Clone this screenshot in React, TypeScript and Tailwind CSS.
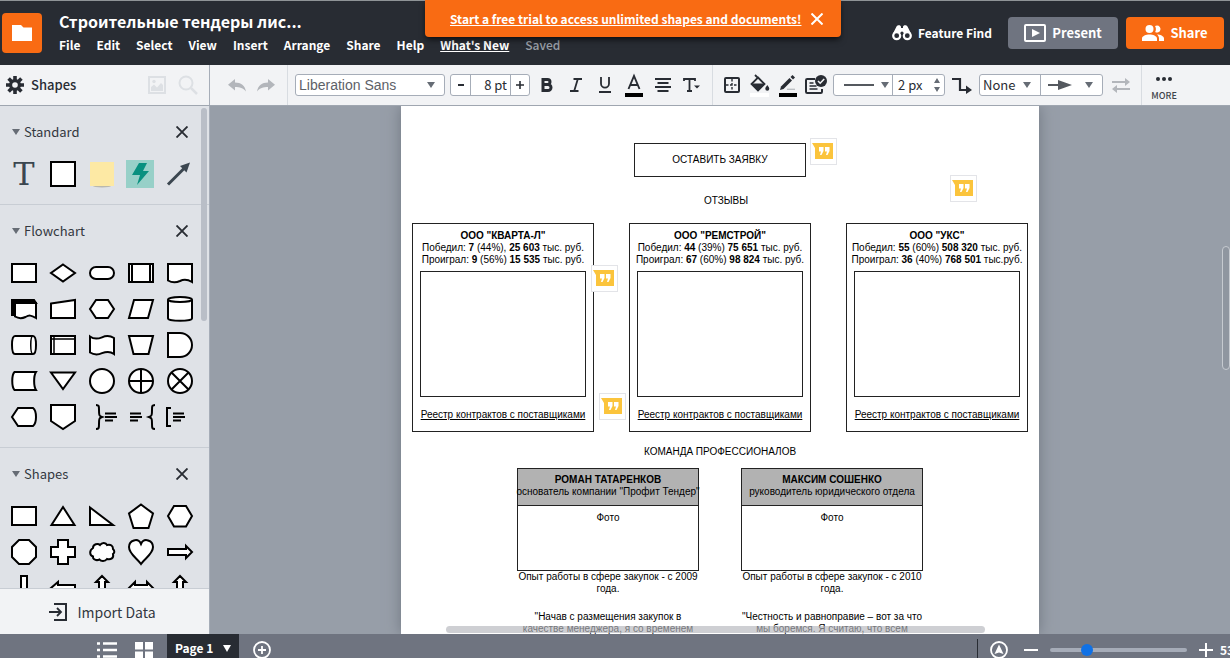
import React from 'react';

const UI_FONT = "font-['Noto_Sans_CJK_SC','Noto_Sans',sans-serif]";

/* ---------- small pieces ---------- */

const Caret: React.FC<{ className?: string }> = ({ className = '' }) => (
  <svg className={`pointer-events-none ${className}`} width="8" height="6" viewBox="0 0 8 6" fill="#666c75" aria-hidden="true">
    <path d="M0 0h8L4 6z" />
  </svg>
);

const Divider = ({ className = '' }: { className?: string }) => (
  <div className={`w-px shrink-0 self-stretch bg-[#d8dce1] ${className}`} />
);

interface ToolProps {
  label: string;
  className: string;
  children: React.ReactNode;
}

const Tool: React.FC<ToolProps> = ({ label, className, children }) => (
  <button type="button" aria-label={label} className={`flex h-8 shrink-0 items-center justify-center ${className}`}>
    {children}
  </button>
);

/* ---------- header ---------- */

const menuItems = ['File', 'Edit', 'Select', 'View', 'Insert', 'Arrange', 'Share', 'Help'];

const Header = () => (
  <header className="relative flex h-[65px] shrink-0 border-t border-[#8f9497] bg-[#282c33] text-white">
    <button type="button" aria-label="Documents" className="mt-3 ml-0.5 flex h-10 w-10 shrink-0 items-center justify-center rounded bg-[#f96b13]">
      <svg width="20" height="16" viewBox="0 0 20 16" fill="#fff">
        <path d="M0 0h9l2.500 2.500H20V16H0z" />
      </svg>
    </button>
    <div className="ml-[17px] min-w-0 flex-1">
      <h1 className="mt-2 h-6 text-base leading-6 font-bold whitespace-nowrap">Строительные тендеры лис...</h1>
      <nav className="mt-0.5 flex h-5 gap-4 text-xs leading-5 font-bold whitespace-nowrap">
        {menuItems.map((item) => (
          <button type="button" key={item}>{item}</button>
        ))}
        <a href="#news" className="underline">What's New</a>
        <span className="font-medium text-[#9a9fa8]">Saved</span>
      </nav>
    </div>
    <div className="mr-1.5 flex h-full items-center gap-2 text-[13px] font-bold">
      <button type="button" className="mr-2 flex items-center gap-1.5 text-xs font-bold">
        <svg width="20" height="16" viewBox="0 0 20 16" aria-hidden="true">
          <path d="M4.500 1.500C5.500-.2 9-.2 9 2v1h2V2c0-2.200 3.500-2.200 4.500-.5L19 8.500H1z" fill="#fff" />
          <circle cx="4.700" cy="10.700" r="3.500" fill="#282c33" stroke="#fff" strokeWidth="2.200" />
          <circle cx="15.300" cy="10.700" r="3.500" fill="#282c33" stroke="#fff" strokeWidth="2.200" />
          <circle cx="10" cy="8" r="1.600" fill="#282c33" />
        </svg>
        Feature Find
      </button>
      <button type="button" className="flex h-8 w-[110px] items-center justify-center gap-1.5 rounded bg-[#6f7480]">
        <svg width="22" height="18" viewBox="0 0 22 18" fill="none" aria-hidden="true">
          <rect x="1" y="1" width="20" height="16" rx="1" stroke="#fff" strokeWidth="2" />
          <path d="M8 5l8 4-8 4z" fill="#fff" />
        </svg>
        Present
      </button>
      <button type="button" className="flex h-8 w-[98px] items-center justify-center gap-1.5 rounded bg-[#f96b13]">
        <svg width="22" height="16" viewBox="0 0 22 16" fill="#fff" aria-hidden="true">
          <circle cx="7.500" cy="4" r="4" />
          <path d="M15 .5a3.500 3.500 0 1 1-1.800 6.500c1-1.700 1-4.300-.2-6z" />
          <path d="M0 16v-2.500C0 11 4 9.500 7.500 9.500S15 11 15 13.500V16zM15 9.500c3 0 7 1.500 7 4V16h-5v-2.500c0-1.600-.8-2.900-2-4z" />
        </svg>
        Share
      </button>
    </div>
    <div className="absolute -top-px left-[425px] flex h-[37px] w-[416px] items-center justify-between rounded-b bg-[#f96b13] pr-[18px] pl-[25px] shadow-md shadow-black/50">
      <a href="#trial" className="text-xs leading-5 font-bold whitespace-nowrap underline">
        Start a free trial to access unlimited shapes and documents!
      </a>
      <button type="button" aria-label="Close">
        <svg width="12" height="12" viewBox="0 0 12 12" stroke="#fff" strokeWidth="2">
          <path d="M.5.5l11 11M11.500.5l-11 11" />
        </svg>
      </button>
    </div>
  </header>
);

/* ---------- toolbar ---------- */

const boxClass = 'flex h-[22px] shrink-0 items-stretch overflow-hidden rounded-[3px] border border-[#a6adb8] bg-white';

const Toolbar = () => (
  <div className="flex h-[41px] shrink-0 items-center border-b border-[#9fa6b0] bg-[#f2f3f5] text-[#282c33]">
    <div className="flex h-full w-[210px] shrink-0 items-center border-r border-[#a6adb8] pl-1.5">
      <svg width="18" height="18" viewBox="0 0 18 18" aria-hidden="true">
        <g stroke="#282c33" strokeWidth="3.600">
          <path d="M9 0v18M0 9h18M2.600 2.600l12.800 12.800M15.400 2.600L2.600 15.400" />
        </g>
        <circle cx="9" cy="9" r="6" fill="#282c33" />
        <circle cx="9" cy="9" r="2.800" fill="#f2f3f5" />
      </svg>
      <h2 className="ml-[7px] text-[13px] leading-5 font-medium">Shapes</h2>
      <button type="button" aria-label="Images" className="ml-auto">
        <svg width="18" height="18" viewBox="0 0 18 18" fill="none">
          <rect x="1" y="1" width="16" height="16" stroke="#dde0e4" strokeWidth="2" />
          <circle cx="6" cy="5.500" r="1.700" fill="#dde0e4" />
          <path d="M3 15v-4l3-2.500 3 3 4-4.500 2 2V15z" fill="#dde0e4" />
        </svg>
      </button>
      <button type="button" aria-label="Search shapes" className="mr-[11px] ml-3">
        <svg width="20" height="20" viewBox="0 0 20 20" fill="none" stroke="#dde0e4">
          <circle cx="8" cy="8" r="6.500" strokeWidth="2" />
          <path d="M13 13l6 6" strokeWidth="2.500" />
        </svg>
      </button>
    </div>

    <Tool label="Undo" className="ml-[18px] w-[18px]">
      <svg width="18" height="13" viewBox="0 0 18 13" fill="#b3b6bb">
        <path d="M7 0v3.500c6 0 10 3 11 9-3-3.500-6-4.500-11-4.500v3.500L0 5.800z" />
      </svg>
    </Tool>
    <Tool label="Redo" className="ml-[11px] w-[18px]">
      <svg width="18" height="13" viewBox="0 0 18 13" fill="#b3b6bb">
        <path d="M11 0v3.500c-6 0-10 3-11 9C3 9 6 8 11 8v3.500l7-5.700z" />
      </svg>
    </Tool>
    <Divider className="ml-3" />

    <div className={`relative ml-[7px] w-[150px] ${boxClass}`}>
      <select aria-label="Font" className="w-full appearance-none pl-[3px] font-['Liberation_Sans',sans-serif] text-sm leading-5 text-[#5d6168]">
        <option>Liberation Sans</option>
      </select>
      <Caret className="absolute top-[7px] right-[9px]" />
    </div>

    <div className={`ml-[5px] w-20 text-[13px] leading-5 ${boxClass}`}>
      <button type="button" aria-label="Smaller" className="flex w-5 items-center justify-center border-r border-[#a6adb8]">
        <span className="h-0.5 w-1.5 bg-[#282c33]" />
      </button>
      <input aria-label="Font size" defaultValue="8 pt" className="w-[39px] pr-[3px] text-right text-[13px] leading-5" />
      <button type="button" aria-label="Larger" className="flex flex-1 items-center justify-center border-l border-[#a6adb8]">
        <svg width="8" height="8" viewBox="0 0 8 8" stroke="#282c33" strokeWidth="1.600"><path d="M4 0v8M0 4h8" /></svg>
      </button>
    </div>

    <Tool label="Bold" className="ml-0.5 w-[29px]">
      <svg width="12" height="14" viewBox="0 0 12 14" fill="none" stroke="#282c33" strokeWidth="3">
        <path d="M2 1.500h4.500a2.500 2.500 0 0 1 0 5H2M2 6.500h5a3 3 0 0 1 0 6H2M2 0v14" />
      </svg>
    </Tool>
    <Tool label="Italic" className="w-[29px]">
      <svg width="12" height="14" viewBox="0 0 12 14" fill="none" stroke="#282c33" strokeWidth="1.800">
        <path d="M3.500 1H12M0 13h8.500M7.800 1L4.200 13" />
      </svg>
    </Tool>
    <Tool label="Underline" className="w-[29px]">
      <svg width="12" height="16" viewBox="0 0 12 16" fill="none" stroke="#282c33" strokeWidth="1.800">
        <path d="M2 0v6.500a4 4.200 0 0 0 8 0V0M0 15h12" />
      </svg>
    </Tool>
    <Tool label="Text color" className="w-[29px]">
      <svg width="18" height="24" viewBox="0 0 18 24" fill="none">
        <path d="M3.500 16L9 3l5.500 13M5.500 12h7" stroke="#282c33" strokeWidth="1.900" />
        <rect y="20" width="18" height="4" fill="#000" />
      </svg>
    </Tool>
    <Tool label="Align" className="w-[29px]">
      <svg width="16" height="14" viewBox="0 0 16 14" stroke="#282c33" strokeWidth="1.800">
        <path d="M0 1h16M2.500 5h11M0 9h16M2.500 13h11" />
      </svg>
    </Tool>
    <Tool label="Text position" className="w-[29px]">
      <svg width="17" height="14" viewBox="0 0 17 14" fill="none">
        <path d="M1 3V1h11v2M6.500 1v12M4 13h5" stroke="#282c33" strokeWidth="1.800" />
        <path d="M11 7.500h6l-3 3z" fill="#282c33" />
      </svg>
    </Tool>
    <Divider className="ml-1.5" />

    <Tool label="Borders" className="ml-[5px] w-7">
      <svg width="16" height="16" viewBox="0 0 16 16" fill="none" stroke="#282c33">
        <rect x="1" y="1" width="14" height="14" rx="1" strokeWidth="2" />
        <path d="M8 2v12M2 8h12" strokeWidth="1.400" strokeDasharray="2.500 1.500" />
      </svg>
    </Tool>
    <Tool label="Fill" className="w-7">
      <svg width="20" height="24" viewBox="0 0 20 24" fill="none">
        <path d="M5 2l3 3M8 4.500l6.500 6.500L8 17.500 1.500 11z" stroke="#282c33" strokeWidth="1.800" />
        <path d="M2 10.500h12.500L8 18z" fill="#282c33" />
        <path d="M17.300 12c1.200 1.700 2 2.700 2 3.700a2 2 0 0 1-4 0c0-1 .8-2 2-3.700z" fill="#282c33" />
        <rect x="0" y="20" width="19" height="4" fill="#fff" />
      </svg>
    </Tool>
    <Tool label="Line color" className="w-7">
      <svg width="18" height="24" viewBox="0 0 18 24" fill="none">
        <path d="M1 17l1-3.500L10.500 5l2.500 2.500L4.500 16z" fill="#282c33" />
        <path d="M11.500 4l2-2L16 4.500l-2 2z" fill="#282c33" />
        <path d="M8 16.300h8" stroke="#b9bcc1" strokeWidth="1.300" />
        <rect y="20" width="18" height="4" fill="#000" />
      </svg>
    </Tool>
    <Tool label="Shape options" className="w-7">
      <svg width="22" height="20" viewBox="0 0 22 20" fill="none">
        <path d="M10 4H2.200Q1 4 1 5.200v11.600Q1 18 2.200 18h13.600q1.200 0 1.200-1.200V14" stroke="#282c33" strokeWidth="2" />
        <path d="M4.500 8h4M4.500 11h7M4.500 14h8" stroke="#282c33" strokeWidth="1.600" />
        <circle cx="16" cy="6" r="6" fill="#282c33" />
        <path d="M13 6l2.200 2.200L19.200 4" stroke="#f2f3f5" strokeWidth="1.600" />
      </svg>
    </Tool>

    <div className={`ml-[3px] w-[112px] ${boxClass}`}>
      <button type="button" aria-label="Line style" className="flex w-[59px] items-center justify-between border-r border-[#a6adb8] pr-[3px] pl-2.5">
        <span className="h-0.5 w-[30px] bg-[#55595f]" />
        <Caret />
      </button>
      <input aria-label="Line width" defaultValue="2 px" className="w-0 min-w-0 flex-1 pl-[5px] text-[13px] leading-5" />
      <svg className="mr-1 shrink-0 self-center" width="6" height="14" viewBox="0 0 6 14" fill="#666c75" aria-hidden="true">
        <path d="M0 5l3-5 3 5zM0 9h6l-3 5z" />
      </svg>
    </div>
    <Tool label="Line shape" className="w-[34px]">
      <svg width="20" height="17" viewBox="0 0 20 17" fill="none">
        <path d="M0 2h8v11h7" stroke="#282c33" strokeWidth="2.200" />
        <path d="M14 8.500l6 4.500-6 4z" fill="#282c33" />
      </svg>
    </Tool>
    <div className={`w-[124px] ${boxClass}`}>
      <div className="relative flex w-[61px] items-stretch border-r border-[#a6adb8]">
        <select aria-label="Line start" className="w-full appearance-none pl-[3px] text-[13px] leading-5">
          <option>None</option>
        </select>
        <Caret className="absolute top-[7px] right-[9px]" />
      </div>
      <button type="button" aria-label="Line end" className="flex flex-1 items-center justify-between pr-[9px] pl-[7px]">
        <svg width="24" height="10" viewBox="0 0 24 10" fill="#55595f">
          <path d="M0 4h10V0l14 5-14 5V6H0z" />
        </svg>
        <Caret />
      </button>
    </div>
    <Tool label="Swap ends" className="w-9">
      <svg width="18" height="15" viewBox="0 0 18 15" fill="none" stroke="#b3b6bb" strokeWidth="1.800">
        <path d="M0 4h15M18 11H3" />
        <path d="M13 0l5 4-5 4zM5 7l-5 4 5 4z" fill="#b3b6bb" stroke="none" />
      </svg>
    </Tool>
    <Divider className="ml-0.5" />
    <button type="button" className="flex w-11 shrink-0 flex-col items-center pt-2 text-[9px] leading-3 font-medium text-[#3f444b]">
      <svg className="mb-[9px]" width="16" height="4" viewBox="0 0 16 4" fill="#282c33" aria-hidden="true">
        <circle cx="2" cy="2" r="2" />
        <circle cx="8" cy="2" r="2" />
        <circle cx="14" cy="2" r="2" />
      </svg>
      MORE
    </button>
  </div>
);

/* ---------- sidebar ---------- */

const textLines = (x: number) => <path d={`M${x} 14.500h11M${x} 18h12M${x} 21.500h8`} />;

const standardShapes: Record<string, React.ReactNode> = {
  Block: <rect x="8" y="6" width="24" height="24" />,
  Note: (
    <g stroke="none">
      <ellipse cx="20" cy="30" rx="9" ry="1.500" fill="#b9b8ae" />
      <rect x="8" y="6" width="24" height="24" fill="#fde9a4" />
    </g>
  ),
  Action: (
    <g stroke="none">
      <rect x="5" y="4" width="28" height="28" fill="#97d0c8" />
      <path d="M18 7h8l-4 8h6L16 29l3-10h-8z" fill="#08907f" />
    </g>
  ),
  Line: (
    <g stroke="#3b4650" fill="#3b4650">
      <path d="M8 28.500L25 11.500" strokeWidth="3" />
      <path d="M30 6.500l-3.500 10-6.500-6.500z" stroke="none" />
    </g>
  ),
};

const flowchartShapes: Record<string, React.ReactNode> = {
  Process: <rect x="8" y="9" width="24" height="18" />,
  Decision: <path d="M20 9.500l12 8.500-12 8.500L8 18z" />,
  Terminator: <rect x="8" y="12" width="24" height="12" rx="6" />,
  'Predefined process': (
    <>
      <rect x="8" y="9" width="24" height="18" />
      <path d="M11 9v18M29 9v18" strokeWidth="2" />
    </>
  ),
  Document: <path d="M8 9h24v18c-5-3-8-3-12-1-4 1.800-8 1.800-12-.5z" />,
  'Multiple documents': (
    <>
      <path d="M8 9h22l2 3H11v12H8z" fill="#000" />
      <path d="M11 12h21v15c-5-3-7-3-10.500-1-3.500 1.600-7 1.600-10.500-.5z" />
    </>
  ),
  'Manual input': <path d="M8 12.500L32 9v18H8z" />,
  Preparation: <path d="M14 9h12l6 9-6 9H14l-6-9z" />,
  Data: <path d="M13 9h19l-5 18H8z" />,
  Database: (
    <>
      <path d="M8 8.500v19c0 3 24 3 24 0v-19" />
      <ellipse cx="20" cy="8.500" rx="12" ry="2.500" />
    </>
  ),
  'Direct access storage': (
    <>
      <path d="M11 9h18c4 0 4 18 0 18H11c-4 0-4-18 0-18z" />
      <path d="M29 9c-3 0-3 18 0 18" strokeWidth="1.500" />
    </>
  ),
  'Internal storage': (
    <>
      <rect x="8" y="9" width="24" height="18" />
      <path d="M11 9v18M8 12h24" strokeWidth="1.500" />
    </>
  ),
  'Paper tape': <path d="M8 9.500c4 3 8 2.500 12 .8 4-1.800 8-1.800 12 .7v16c-4-3-8-2.500-12-.8-4 1.800-8 1.800-12-.7z" />,
  'Manual operation': <path d="M8 9h24l-4.500 18h-15z" />,
  Delay: <path d="M8 6h12a12 12 0 0 1 0 24H8z" />,
  'Stored data': <path d="M10.500 9H32c-2.500 4-2.500 14 0 18H10.500C7.500 24 7.500 12 10.500 9z" />,
  Merge: <path d="M8 9.500h24L20 26z" />,
  Connector: <circle cx="20" cy="18" r="12" />,
  Or: (
    <>
      <circle cx="20" cy="18" r="12" />
      <path d="M20 6v24M8 18h24" />
    </>
  ),
  'Summing junction': (
    <>
      <circle cx="20" cy="18" r="12" />
      <path d="M11.500 9.500l17 17M28.500 9.500l-17 17" />
    </>
  ),
  Display: <path d="M14 9h15c4 3 4 15 0 18H14l-6-9z" />,
  'Off-page link': <path d="M8 6h24v16l-12 8-12-8z" />,
  'Brace note': (
    <g fill="none">
      <path d="M14 6c3 0 3 1 3 5 0 5 0 6 3 7-3 1-3 2-3 7 0 4 0 5-3 5" />
      {textLines(23)}
    </g>
  ),
  'Left brace note': (
    <g fill="none">
      <path d="M34 6c-3 0-3 1-3 5 0 5 0 6-3 7 3 1 3 2 3 7 0 4 0 5 3 5" />
      {textLines(9)}
    </g>
  ),
  Bracket: (
    <g fill="none">
      <path d="M11 9H7v18h4" />
      {textLines(13)}
    </g>
  ),
};

const basicShapes: Record<string, React.ReactNode> = {
  Rectangle: <rect x="8" y="9" width="24" height="18" />,
  Triangle: <path d="M20 9l11.500 18h-23z" />,
  'Right triangle': <path d="M8 9.500V27h23z" />,
  Pentagon: <path d="M20 6.500l12 9L27.500 30h-15L8 15.500z" />,
  Hexagon: <path d="M14 8h12l6 10-6 10.500H14L8 18z" />,
  Octagon: <path d="M15 6h10l7 7v10l-7 7H15l-7-7V13z" />,
  Cross: <path d="M15 6h10v7h7v10h-7v7H15v-7H8V13h7z" />,
  Cloud: (
    <path d="M11 14c0-4 5-5 7-3 2-3 6-2.500 7 0 4-1 6 1 6 4 2 2 1.500 4 0 5 1 4-2 6-6 5-2 2.500-6 2.500-7.500.5-3 1.500-7 0-6.500-3-3.500-1-4-6 0-8.500z" />
  ),
  Heart: <path d="M20 30C16 24 8 20 8 13c0-6.500 9-10 12-3 3-7 12-3.500 12 3 0 7-8 11-12 17z" />,
  'Right arrow': <path d="M8 15h18v-3l6 6-6 6v-3H8z" />,
  'Down arrow': <path d="M17 6h6v22h5l-8 6-8-6h5z" />,
  'Left arrow': <path d="M32 15H15v-3l-7 6 7 6v-3h17z" />,
  'Up arrow': <path d="M20 6l6 6h-3v18h-6V12h-3z" />,
  'Double arrow': <path d="M8 18l6-6v3h12v-3l6 6-6 6v-3H14v3z" />,
  'Vertical arrow': <path d="M20 6l6 6h-3v12h3l-6 6-6-6h3V12h-3z" />,
};

interface ShapeSectionProps {
  title: string;
  shapes: Record<string, React.ReactNode>;
  withText?: boolean;
}

const ShapeSection: React.FC<ShapeSectionProps> = ({ title, shapes, withText }) => (
  <section className="shrink-0 border-b border-[#c8cdd4] pb-3">
    <div className="flex h-[50px] items-center pt-0.5 pr-[21px] pl-3">
      <Caret />
      <h3 className="ml-1 text-[13px] leading-5 text-[#33383f]">{title}</h3>
      <button type="button" aria-label={`Close ${title}`} className="ml-auto">
        <svg width="12" height="12" viewBox="0 0 12 12" stroke="#282c33" strokeWidth="1.900">
          <path d="M.5.5l11 11M11.500.5l-11 11" />
        </svg>
      </button>
    </div>
    <div className="ml-1 grid w-[195px] grid-cols-5">
      {withText && (
        <button type="button" aria-label="Text" className="h-9 pl-px font-['DejaVu_Serif',serif] text-[32px] leading-9 text-[#3b4650]">
          T
        </button>
      )}
      {Object.entries(shapes).map(([name, drawing]) => (
        <button type="button" key={name} aria-label={name} className="h-9">
          <svg width="39" height="36" viewBox="0 0 39 36" fill="#fff" stroke="#000" strokeWidth="2">
            {drawing}
          </svg>
        </button>
      ))}
    </div>
  </section>
);

const Sidebar = () => (
  <aside className="relative flex w-[210px] shrink-0 flex-col border-r border-[#a6adb8] bg-[#dfe2e7]">
    <div className="flex min-h-0 flex-1 flex-col overflow-hidden">
      <ShapeSection title="Standard" shapes={standardShapes} withText />
      <ShapeSection title="Flowchart" shapes={flowchartShapes} />
      <ShapeSection title="Shapes" shapes={basicShapes} />
    </div>
    <div className="absolute top-0.5 right-0.5 h-[213px] w-1.5 rounded-full bg-[#b9bec7]" />
    <button type="button" className="flex h-[46px] shrink-0 items-center justify-center gap-2.5 border-t border-[#c8cdd4] bg-[#f2f3f5] pr-1 text-sm text-[#33383f]">
      <svg width="18" height="18" viewBox="0 0 18 18" fill="none" stroke="#282c33" strokeWidth="2" aria-hidden="true">
        <path d="M5 1h12v16H5" />
        <path d="M0 9h11M8 5l4 4-4 4" strokeWidth="1.800" />
      </svg>
      Import Data
    </button>
  </aside>
);

/* ---------- document ---------- */

interface Company {
  name: string;
  won: React.ReactNode;
  lost: React.ReactNode;
}

const companies: Company[] = [
  {
    name: 'ООО "КВАРТА-Л"',
    won: <>Победил: <b>7</b> (44%), <b>25 603</b> тыс. руб.</>,
    lost: <>Проиграл: <b>9</b> (56%) <b>15 535</b> тыс. руб.</>,
  },
  {
    name: 'ООО "РЕМСТРОЙ"',
    won: <>Победил: <b>44</b> (39%) <b>75 651</b> тыс. руб.</>,
    lost: <>Проиграл: <b>67</b> (60%) <b>98 824</b> тыс. руб.</>,
  },
  {
    name: 'ООО "УКС"',
    won: <>Победил: <b>55</b> (60%) <b>508 320</b> тыс. руб.</>,
    lost: <>Проиграл: <b>36</b> (40%) <b>768 501</b> тыс.руб.</>,
  },
];

const people = [
  {
    name: 'РОМАН ТАТАРЕНКОВ',
    role: 'основатель компании "Профит Тендер"',
    experience: 'Опыт работы в сфере закупок - с 2009 года.',
    quote: ['"Начав с размещения закупок в', 'качестве менеджера, я со временем'],
  },
  {
    name: 'МАКСИМ СОШЕНКО',
    role: 'руководитель юридического отдела',
    experience: 'Опыт работы в сфере закупок - с 2010 года.',
    quote: ['"Честность и равноправие – вот за что', 'мы боремся. Я считаю, что всем'],
  },
];

const Comment: React.FC<{ className: string }> = ({ className }) => (
  <button type="button" aria-label="Comment" className={`absolute flex h-[27px] w-[27px] items-center justify-center border border-[#e3e4e8] bg-white ${className}`}>
    <svg width="23" height="17" viewBox="0 0 23 17">
      <path d="M0 0h21v16H3V5z" fill="#fbc43c" />
      <path d="M7 4h4.500v4L9.500 12H8l1-3.500H7zM13 4h4.500v4l-2 4H14l1-3.500h-2z" fill="#fff" />
    </svg>
  </button>
);

const Canvas = () => (
  <main className="relative min-w-0 flex-1 overflow-hidden bg-[#979ea8] font-['Liberation_Sans',Arial,sans-serif] text-[10px] leading-3 text-black">
    <div className="relative mx-auto flex h-full w-[638px] flex-col items-center bg-white shadow-[0_0_14px_#6f7681]">
      <div className="mt-[37px] flex h-[34px] w-[172px] shrink-0 items-center justify-center border border-[#222]">ОСТАВИТЬ ЗАЯВКУ</div>
      <p className="mt-[18px] pl-3">ОТЗЫВЫ</p>
      <div className="mt-4 flex w-full shrink-0 justify-between px-[11px]">
        {companies.map((company) => (
          <article key={company.name} className="flex h-[209px] w-[182px] flex-col items-center border border-[#222] pt-1.5 whitespace-nowrap">
            <h4 className="font-bold">{company.name}</h4>
            <p>{company.won}</p>
            <p className="leading-[11px]">{company.lost}</p>
            <div className="mt-1.5 h-[126px] w-[166px] border border-[#222]" />
            <a href="#contracts" className="mt-3 underline">Реестр контрактов с поставщиками</a>
          </article>
        ))}
      </div>
      <p className="mt-3.5">КОМАНДА ПРОФЕССИОНАЛОВ</p>
      <div className="mt-2.5 flex shrink-0 gap-[42px] text-center">
        {people.map((person) => (
          <article key={person.name} className="w-[182px]">
            <div className="h-[103px] border border-[#222] whitespace-nowrap">
              <div className="flex h-[37px] flex-col items-center border-b border-[#222] bg-[#b2b2b2] pt-[5px]">
                <h4 className="font-bold">{person.name}</h4>
                <p>{person.role}</p>
              </div>
              <p className="mt-1.5">Фото</p>
            </div>
            <p>{person.experience}</p>
            <p className="mt-4 whitespace-nowrap">{person.quote[0]}</p>
            <p className="leading-[11px] whitespace-nowrap">{person.quote[1]}</p>
          </article>
        ))}
      </div>

      <Comment className="top-8 left-[409px]" />
      <Comment className="top-[69px] left-[549px]" />
      <Comment className="top-[159px] left-[190px]" />
      <Comment className="top-[287px] left-[198px]" />
    </div>
    <div className="absolute bottom-[1px] left-[236px] h-[7px] w-[539px] rounded-full bg-[#b4b6bb]/65" />
    <div className="absolute top-[140px] right-0 h-[124px] w-2 rounded-full border border-[#c6cad0] bg-[#8f96a0]" />
  </main>
);

/* ---------- footer ---------- */

const Footer = () => (
  <footer className="h-6 shrink-0 overflow-hidden bg-[#6f7480] text-white">
    <div className="flex h-8 items-center">
      <button type="button" aria-label="Page list" className="ml-[97px] shrink-0">
        <svg width="20" height="16" viewBox="0 0 20 16" stroke="#fff" strokeWidth="2.600">
          <path d="M0 1.500h3M6 1.500h14M0 8h3M6 8h14M0 14.500h3M6 14.500h14" />
        </svg>
      </button>
      <button type="button" aria-label="Page grid" className="ml-[18px] shrink-0">
        <svg width="18" height="17" viewBox="0 0 18 17" fill="#fff">
          <path d="M0 0h8v7.500H0zM10 0h8v7.500h-8zM0 9.500h8V17H0zM10 9.500h8V17h-8z" />
        </svg>
      </button>
      <div className="relative ml-3.5 h-8 w-[72px] shrink-0 bg-[#282c33]">
        <select aria-label="Page" className="h-7 w-full appearance-none pl-2 text-xs leading-5 font-bold">
          <option>Page 1</option>
        </select>
        <svg className="pointer-events-none absolute top-[11px] right-2" width="8" height="7" viewBox="0 0 8 7" fill="#fff"><path d="M0 0h8L4 7z" /></svg>
      </div>
      <button type="button" aria-label="Add page" className="ml-3.5 shrink-0">
        <svg width="18" height="18" viewBox="0 0 18 18" fill="none" stroke="#fff" strokeWidth="1.800">
          <circle cx="9" cy="9" r="8" />
          <path d="M9 5v8M5 9h8" />
        </svg>
      </button>
      <div className="mt-2.5 ml-auto h-8 w-px shrink-0 bg-[#282c33]" />
      <button type="button" aria-label="Fit page" className="ml-3 shrink-0">
        <svg width="18" height="18" viewBox="0 0 18 18">
          <circle cx="9" cy="9" r="8" fill="none" stroke="#fff" strokeWidth="1.800" />
          <path d="M9 3.500l4.500 9.500L9 11.500 4.500 13z" fill="#fff" />
        </svg>
      </button>
      <button type="button" aria-label="Zoom out" className="ml-4 flex h-6 w-3.5 shrink-0 items-center">
        <span className="h-0.5 w-full bg-white" />
      </button>
      <input
        type="range"
        aria-label="Zoom"
        defaultValue="25"
        className="ml-3 h-1 w-[137px] shrink-0 appearance-none rounded-full bg-[#a6acb8] [&::-webkit-slider-thumb]:h-3 [&::-webkit-slider-thumb]:w-3 [&::-webkit-slider-thumb]:appearance-none [&::-webkit-slider-thumb]:rounded-full [&::-webkit-slider-thumb]:bg-[#1071e5]"
      />
      <button type="button" aria-label="Zoom in" className="ml-3 shrink-0">
        <svg width="14" height="14" viewBox="0 0 14 14" stroke="#fff" strokeWidth="2"><path d="M7 0v14M0 7h14" /></svg>
      </button>
      <span className="ml-[7px] w-2.5 shrink-0 overflow-hidden text-xs leading-5 font-bold">53%</span>
    </div>
  </footer>
);

const App: React.FC = () => (
  <div className={`flex h-screen flex-col overflow-hidden ${UI_FONT}`}>
    <Header />
    <Toolbar />
    <div className="flex min-h-0 flex-1">
      <Sidebar />
      <Canvas />
    </div>
    <Footer />
  </div>
);

export default App;
